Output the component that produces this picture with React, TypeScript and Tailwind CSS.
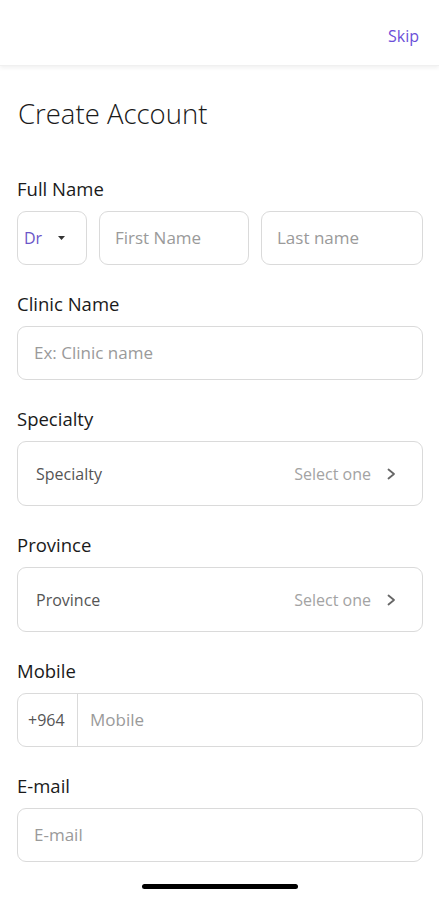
const font = { fontFamily: '"Open Sans", "Noto Sans", sans-serif' };

function Label({ children }: { children: string }) {
  return <div className="text-[18.5px] leading-[22px] font-medium text-[#1a1a1a] mb-[11px]">{children}</div>;
}

function Chevron() {
  return (
    <svg width="9" height="12" viewBox="0 0 9 12" fill="none">
      <path d="M1.5 1.5L7 6l-5.5 4.5" stroke="#666666" strokeWidth="1.8" strokeLinecap="round" strokeLinejoin="round" />
    </svg>
  );
}

function TextBox({ placeholder }: { placeholder: string }) {
  return (
    <div className="h-[54px] border border-[#dadada] rounded-[9px] flex items-center pl-[16px]">
      <span className="text-[17px] text-[#9a9a9a]">{placeholder}</span>
    </div>
  );
}

function SelectBox({ label }: { label: string }) {
  return (
    <div className="h-[65px] border border-[#dadada] rounded-[9px] flex items-center justify-between pl-[18px] pr-[26px]">
      <span className="text-[16px] text-[#555555]">{label}</span>
      <div className="flex items-center gap-[16px]">
        <span className="text-[16px] text-[#a3a3a3]">Select one</span>
        <Chevron />
      </div>
    </div>
  );
}

export default function App() {
  return (
    <div className="w-[439px] h-[900px] bg-white flex flex-col overflow-hidden" style={font}>
      {/* Header */}
      <div className="h-[66px] shrink-0 flex items-center justify-end pr-[20px] pt-[6px] shadow-[0_2px_4px_rgba(0,0,0,0.06)] border-b border-[#f0f0f0]">
        <span className="text-[16px] text-[#6b4fd8]">Skip</span>
      </div>

      <div className="pl-[17px] pr-[16px]">
        <h1 className="text-[27.5px] leading-[34px] font-light text-[#1a1a1a] mt-[31px] pl-[1px]">Create Account</h1>

        {/* Full Name */}
        <div className="mt-[47px]">
          <Label>Full Name</Label>
          <div className="flex gap-[12px]">
            <div className="w-[70px] h-[54px] border border-[#dadada] rounded-[9px] flex items-center pl-[6px] gap-[16px]">
              <span className="text-[16px] text-[#6b55c8]">Dr</span>
              <svg width="7" height="4" viewBox="0 0 7 4"><path d="M0 0h7L3.5 4z" fill="#333333" /></svg>
            </div>
            <div className="w-[150px] h-[54px] border border-[#dadada] rounded-[9px] flex items-center pl-[15px]">
              <span className="text-[17px] text-[#9a9a9a]">First Name</span>
            </div>
            <div className="flex-1 h-[54px] border border-[#dadada] rounded-[9px] flex items-center pl-[15px]">
              <span className="text-[17px] text-[#9a9a9a]">Last name</span>
            </div>
          </div>
        </div>

        <div className="mt-[28px]">
          <Label>Clinic Name</Label>
          <TextBox placeholder="Ex: Clinic name" />
        </div>

        <div className="mt-[28px]">
          <Label>Specialty</Label>
          <SelectBox label="Specialty" />
        </div>

        <div className="mt-[28px]">
          <Label>Province</Label>
          <SelectBox label="Province" />
        </div>

        <div className="mt-[28px]">
          <Label>Mobile</Label>
          <div className="h-[54px] border border-[#dadada] rounded-[9px] flex items-center">
            <span className="text-[16px] text-[#555555] pl-[10px] w-[59px]">+964</span>
            <div className="w-px self-stretch bg-[#dadada]" />
            <span className="text-[17px] text-[#9a9a9a] pl-[12px]">Mobile</span>
          </div>
        </div>

        <div className="mt-[28px]">
          <Label>E-mail</Label>
          <TextBox placeholder="E-mail" />
        </div>
      </div>

      <div className="mt-[22px] flex justify-center">
        <div className="w-[156px] h-[5px] rounded-full bg-black" />
      </div>
    </div>
  );
}
